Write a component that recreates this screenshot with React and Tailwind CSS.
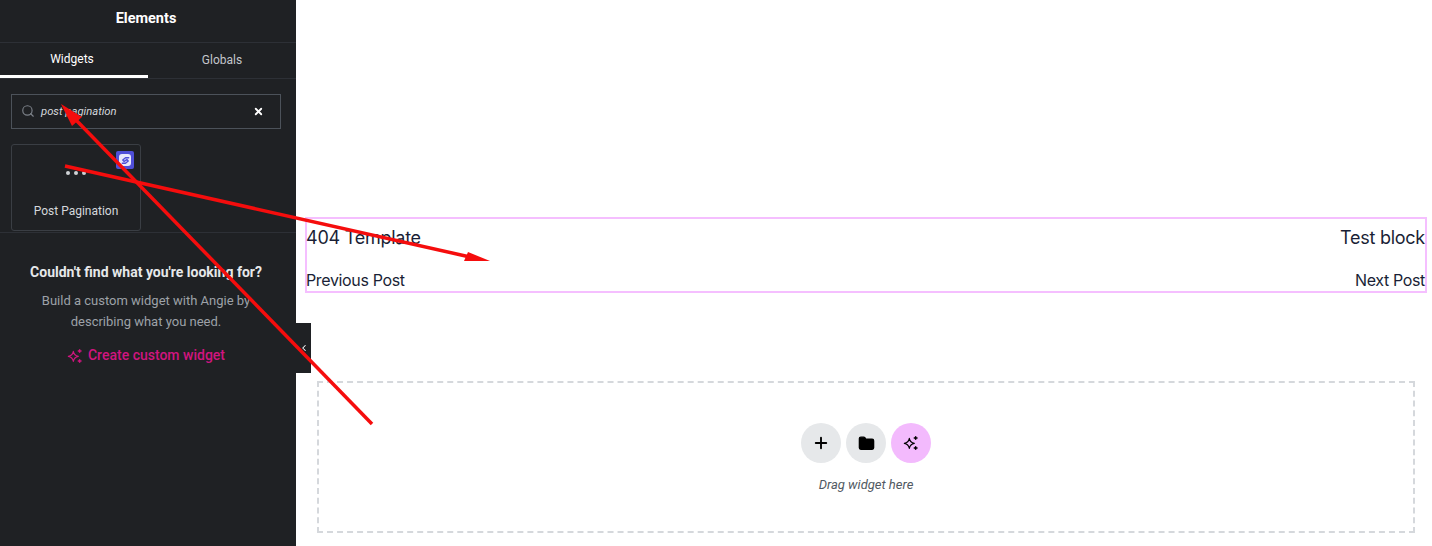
import React from 'react';
import { Search, X, Plus, Folder, ChevronLeft } from 'lucide-react';

function Sparkles({ className }) {
  return (
    <svg viewBox="0 0 24 24" className={className} fill="none" stroke="currentColor" strokeWidth="1.7" strokeLinejoin="round">
      <path d="M9.500 5c.9 4.600 2.900 6.600 7.500 7.500-4.600.9-6.600 2.900-7.500 7.500-.9-4.600-2.900-6.600-7.500-7.500C6.600 11.600 8.600 9.600 9.500 5z" />
      <path d="M19 1.500l1 2 2 1-2 1-1 2-1-2-2-1 2-1z" fill="currentColor" strokeWidth="0.8" />
      <path d="M19 16.500l1 2 2 1-2 1-1 2-1-2-2-1 2-1z" fill="currentColor" strokeWidth="0.8" />
    </svg>
  );
}

function Sidebar() {
  return (
    <aside className="relative w-[296px] shrink-0 bg-[#1f2124] font-['Roboto',sans-serif]">
      <div className="h-[43px] border-b border-[#2d3036] pb-[4px] pr-[4px] flex items-center justify-center text-[14.500px] font-bold text-white">
        Elements
      </div>
      <div className="flex h-[36px] border-b border-[#2d3036] text-[12px]">
        <div className="w-[148px] h-[35px] border-b-[3px] border-white flex items-center justify-center text-white pr-[4px]">Widgets</div>
        <div className="w-[148px] flex items-center justify-center text-[#c4c7cc] pb-[1px]">Globals</div>
      </div>
      <div className="px-[11px] pt-[15px]">
        <div className="h-[35px] w-[270px] border border-[#4c525a] flex items-center pl-[9px] pr-[16px] text-[11.250px] italic text-[#d5d8dc]">
          <Search className="w-[14px] h-[14px] text-[#7c8189] mr-[6px] -mt-[1px]" />
          <span className="flex-1 pt-[1px]">post pagination</span>
          <X className="w-[11px] h-[11px] text-white" strokeWidth={4} />
        </div>
        <div className="relative mt-[15px] w-[130px] h-[87px] border border-[#3a3e44] rounded-[3px] flex flex-col items-center">
          <div className="absolute right-[6px] top-[6px] w-[18px] h-[18px] rounded-[2px] bg-[#4f4fd8] flex items-center justify-center">
            <div className="w-[12px] h-[12px] rounded-[3px] bg-[#e8e8fb] flex items-center justify-center">
              <svg viewBox="0 0 12 12" className="w-[11px] h-[11px]" fill="none" stroke="#4f4fd8" strokeWidth="1.500">
                <path d="M9.500 3H6L3 5.500 4.500 7 7.500 5 9 6.500 6 9H2.500" strokeLinecap="round" strokeLinejoin="round" />
              </svg>
            </div>
          </div>
          <div className="mt-[26px] flex gap-[4px]">
            <span className="w-[4px] h-[4px] rounded-full bg-[#cfd2d6]" />
            <span className="w-[4px] h-[4px] rounded-full bg-[#cfd2d6]" />
            <span className="w-[4px] h-[4px] rounded-full bg-[#cfd2d6]" />
          </div>
          <div className="mt-[26.500px] text-[12px] leading-[18px] text-[#d5d8dc]">Post Pagination</div>
        </div>
      </div>
      <div className="mt-[1px] border-t border-[#2d3036] pt-[29px] pr-[4px] flex flex-col items-center">
        <div className="text-[14px] font-bold leading-[20px] text-[#e6e8ea]">Couldn't find what you're looking for?</div>
        <p className="mt-[8px] text-center text-[13px] leading-[21px] text-[#9da1a8]">
          Build a custom widget with Angie by
          <br />
          describing what you need.
        </p>
        <div className="mt-[13px] flex items-center gap-[5px] text-[14px] font-medium text-[#d0157f]">
          <Sparkles className="w-[16px] h-[16px]" />
          Create custom widget
        </div>
      </div>
      <div className="absolute left-full top-[323px] w-[15px] h-[50px] bg-[#1f2124] flex items-center justify-center text-white">
        <ChevronLeft className="w-[10px] h-[10px]" strokeWidth={2.500} />
      </div>
    </aside>
  );
}

function Canvas() {
  return (
    <main className="flex-1 pl-[9px] pr-[5px] pt-[217px] font-['Inter',sans-serif]">
      <div className="h-[76px] border-2 border-[#f5bfff] flex justify-between text-[#1a1f36]">
        <div className="-ml-[1px]">
          <div className="mt-[6px] text-[18px] leading-[26px] tracking-[-0.25px]">404 Template</div>
          <div className="mt-[17px] text-[16px] leading-[24px] tracking-[-0.35px]">Previous Post</div>
        </div>
        <div className="text-right">
          <div className="mt-[6px] text-[18px] leading-[26px] tracking-[-0.25px]">Test block</div>
          <div className="mt-[17px] text-[16px] leading-[24px] tracking-[-0.35px]">Next Post</div>
        </div>
      </div>
      <div className="mt-[88px] ml-[12px] mr-[12px] h-[152px] border-2 border-dashed border-[#d5d8dc] flex flex-col items-center pt-[40px] font-['Roboto',sans-serif]">
        <div className="flex gap-[5px]">
          <div className="w-[40px] h-[40px] rounded-full bg-[#e6e8ea] flex items-center justify-center text-black">
            <Plus className="w-[18px] h-[18px]" strokeWidth={2.500} />
          </div>
          <div className="w-[40px] h-[40px] rounded-full bg-[#e6e8ea] flex items-center justify-center text-black">
            <Folder className="w-[17px] h-[17px]" fill="currentColor" />
          </div>
          <div className="w-[40px] h-[40px] rounded-full bg-[#f3bafd] flex items-center justify-center text-black">
            <Sparkles className="w-[16px] h-[16px]" />
          </div>
        </div>
        <div className="mt-[12px] text-[13px] italic text-[#515962]">Drag widget here</div>
      </div>
    </main>
  );
}

function Arrows() {
  // annotation arrows drawn on top of the whole screenshot
  return (
    <svg className="absolute inset-0 pointer-events-none" width="1432" height="546" viewBox="0 0 1432 546">
      <line x1="372" y1="424" x2="76" y2="120" stroke="#f50d0d" strokeWidth="3.500" />
      <polygon points="61,104 82,117 72,126" fill="#f50d0d" />
      <line x1="65" y1="166" x2="470" y2="257" stroke="#f50d0d" strokeWidth="3.500" />
      <polygon points="490,261 464,261 468,252" fill="#f50d0d" />
    </svg>
  );
}

export default function App() {
  return (
    <div className="relative flex h-[546px] w-[1432px] overflow-hidden bg-white">
      <Sidebar />
      <Canvas />
      <Arrows />
    </div>
  );
}
